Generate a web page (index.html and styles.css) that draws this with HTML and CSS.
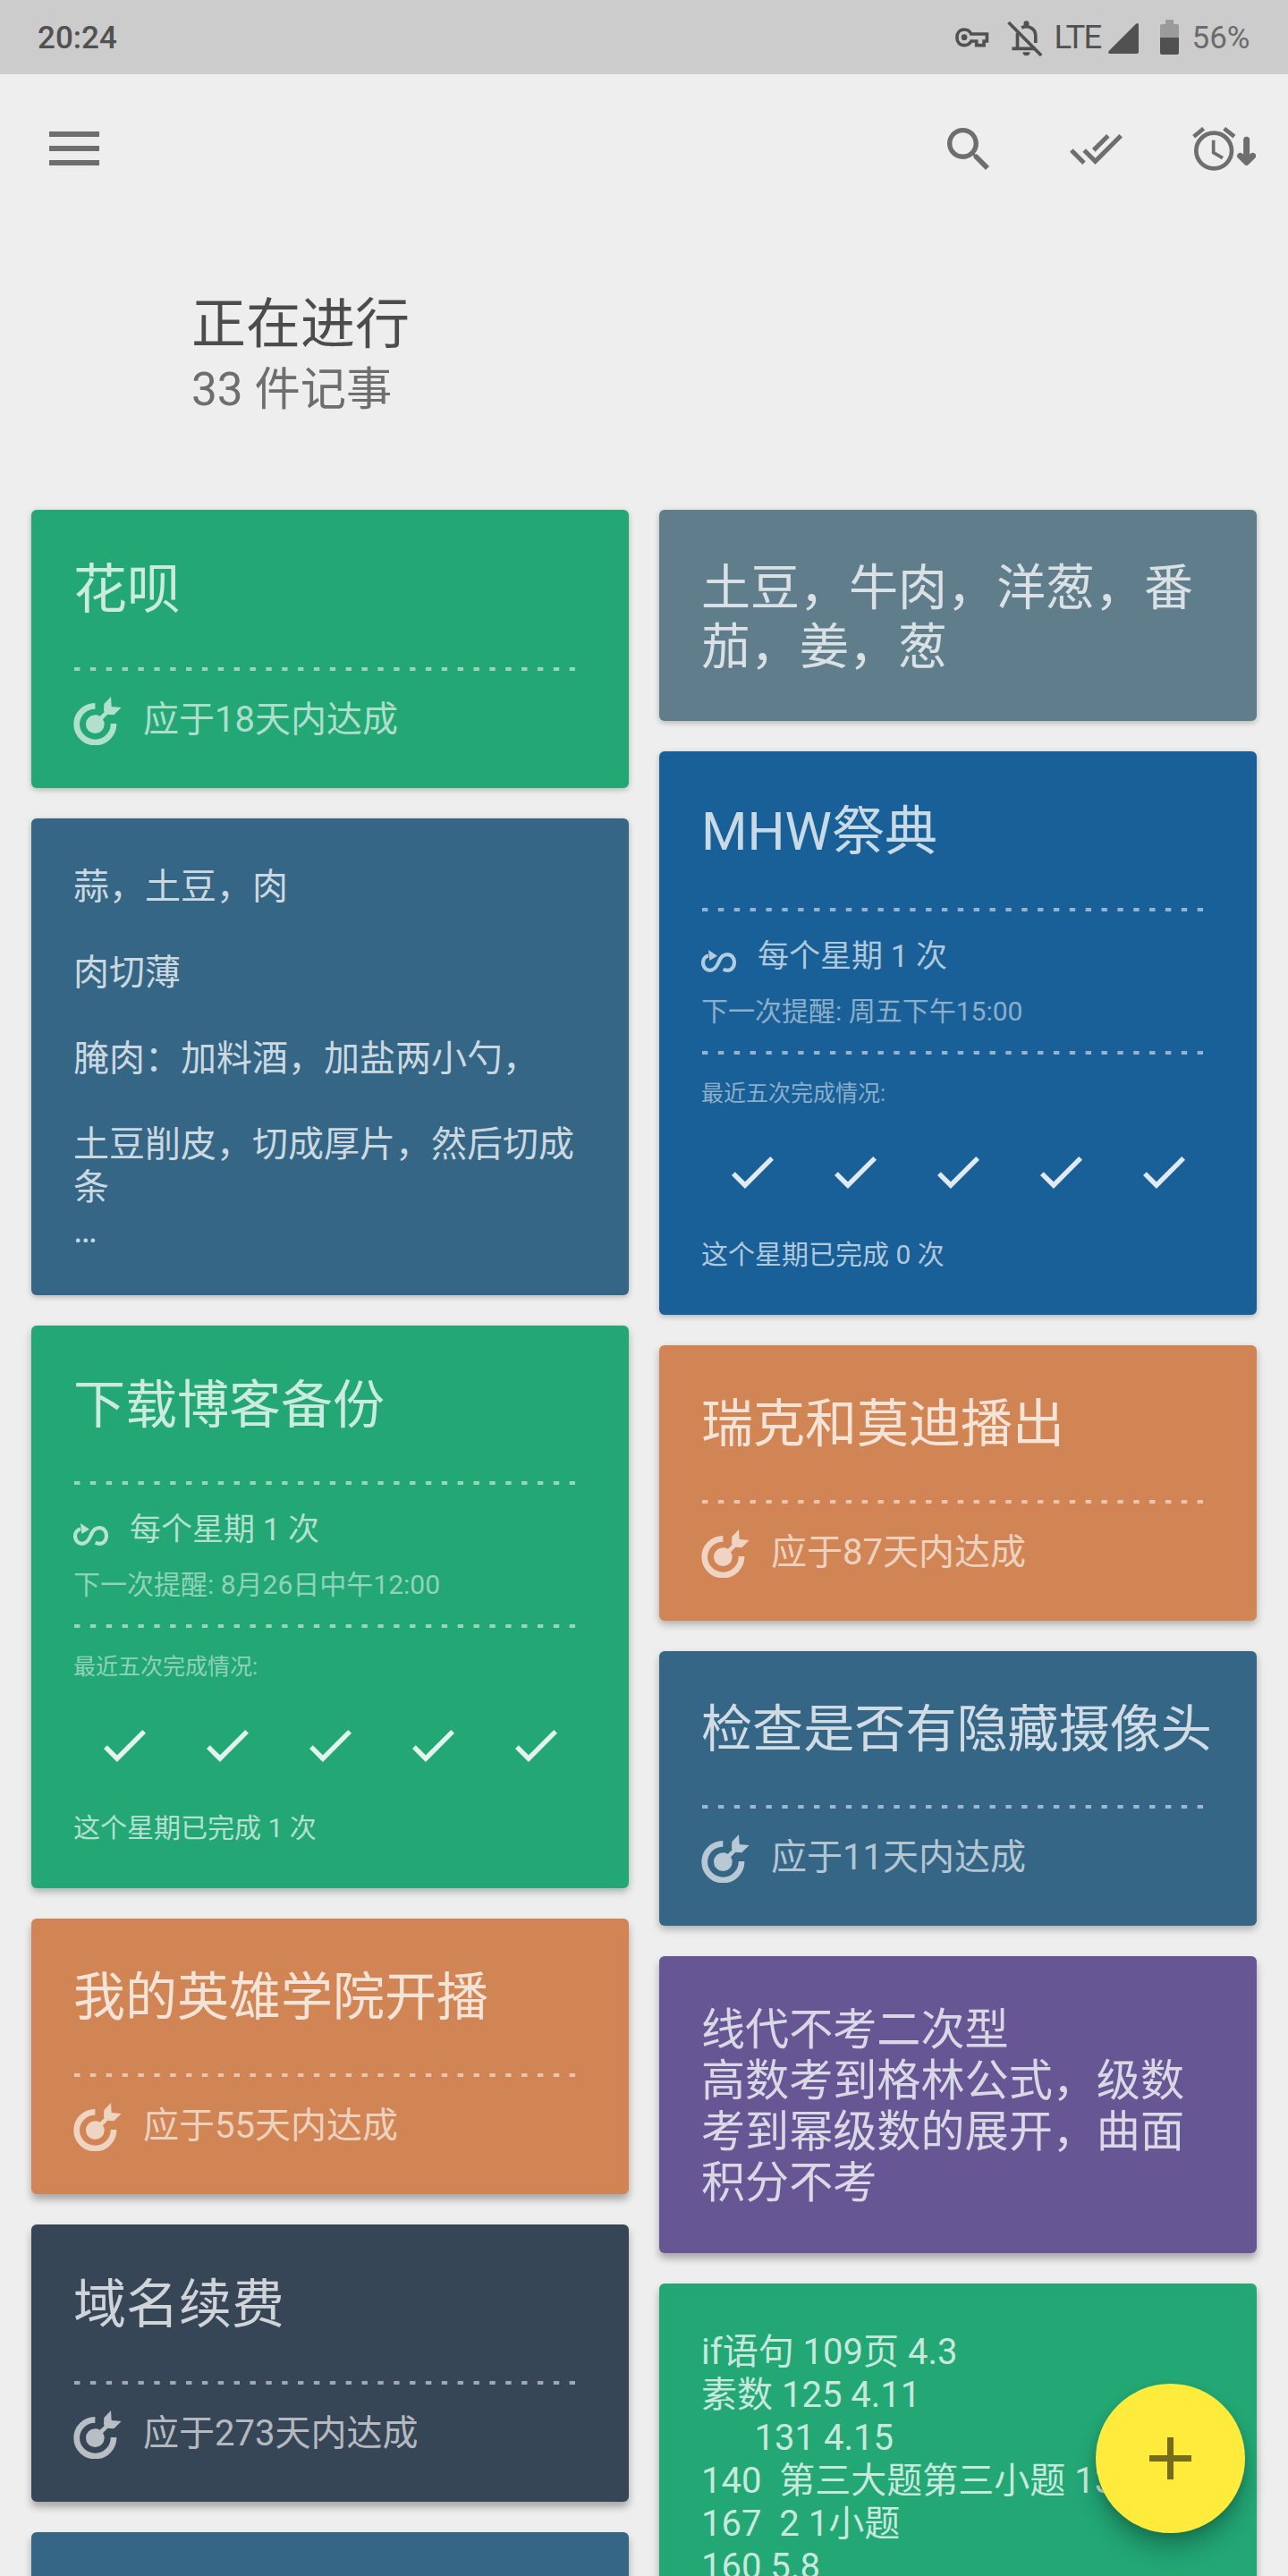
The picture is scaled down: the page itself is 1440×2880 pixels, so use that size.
FILE: index.html
```html
<!DOCTYPE html>
<html lang="zh-CN">
<head>
<meta charset="utf-8">
<title>正在进行</title>
<link rel="stylesheet" href="styles.css">
</head>
<body>
<svg class="defs" aria-hidden="true">
  <symbol id="target" viewBox="12 12 162 162">
    <path fill="none" stroke="currentColor" stroke-width="20" d="M85 43A62 61 0 1 0 147 102"/>
    <path fill="currentColor" d="M85 73Q94 73 101 77L117 62L114 61L115 36L138 12L140 45L173 48L148 73L127 71L111 88Q116 95 116 104A31 31 0 1 1 85 73Z"/>
  </symbol>
  <symbol id="loop" viewBox="12 24 117 75">
    <path fill="none" stroke="currentColor" stroke-width="12.500" d="M36 44C24 46 18 56 18 67C18 82 28 92.500 41 92.500C56 92.500 64 80 70 66C76 50 86 39.500 99 39.500C113 39.500 123 51 123 66C123 81 113 92.500 99 92.500C95 92.500 90 91 86 89"/>
    <path fill="currentColor" d="M36 24L66 44L40 60Z"/>
  </symbol>
  <symbol id="check" viewBox="3.41 5.59 17.59 13.41">
    <path fill="currentColor" d="M9 16.170L4.830 12l-1.420 1.410L9 19 21 7l-1.410-1.410z"/>
  </symbol>
</svg>
<div class="screen">
  <header class="status">
    <span class="clock">20:24</span>
    <svg class="key" viewBox="204 93 112 66"><path fill="none" stroke="#515151" stroke-width="11" d="M257 114H310V138H300V152H275V138H257C252 148 244 152 234 152C219 152 209.500 141 209.500 126C209.500 110 219 99 234 99C245 99 253 105 257 114Z"/><circle cx="234" cy="125" r="10" fill="#515151"/></svg>
    <svg class="bell" viewBox="377 68 119 120"><g fill="none" stroke="#515151"><path stroke-width="11" d="M381 74L491 185"/><path stroke-width="11" d="M393 162H472M411 162V110M425 92C447 82 471 94 472 118V143"/></g><path fill="#515151" d="M432 88V78a9 9 0 0 1 18 0V88zM429 174H453a12 12 0 0 1-24 0z"/></svg>
    <span class="net">LTE</span>
    <svg class="signal" viewBox="0 0 34 34"><path fill="#515151" d="M31 .7Q34-1 34 2V32Q34 34 32 34H2Q-1 34 .7 31Z"/></svg>
    <svg class="battery" viewBox="0 0 21 39"><path fill="#9b9b9b" d="M6 0H15V5H19Q21 5 21 7V20H0V7Q0 5 2 5H6Z"/><path fill="#515151" d="M0 20H21V37Q21 39 19 39H2Q0 39 0 37Z"/></svg>
    <span class="percent">56%</span>
  </header>
  <nav class="toolbar">
    <svg class="menu" viewBox="0 0 56 38"><path fill="#6e6e6e" d="M0 0H56V6H0zM0 16H56V22H0zM0 32H56V38H0z"/></svg>
    <svg class="search" viewBox="3 3 17.490 17.490"><path fill="#6e6e6e" d="M15.500 14h-.79l-.28-.27C15.410 12.590 16 11.110 16 9.500 16 5.910 13.090 3 9.500 3S3 5.910 3 9.500 5.910 16 9.500 16c1.610 0 3.090-.59 4.230-1.570l.27.28v.79l5 4.990L20.490 19l-4.990-5zm-6 0C7.010 14 5 11.990 5 9.500S7.010 5 9.500 5 14 7.010 14 9.500 11.990 14 9.500 14z"/></svg>
    <svg class="done" viewBox=".41 5.590 23.250 13.410"><path fill="#6e6e6e" d="M18 7l-1.410-1.410-6.340 6.340 1.410 1.410L18 7zm4.240-1.410L11.660 16.170 7.480 12l-1.410 1.410L11.660 19l12-12-1.420-1.410zM.41 13.410L6 19l1.410-1.410L1.830 12 .41 13.410z"/></svg>
    <svg class="alarm" viewBox="999 426 214 146"><g fill="none" stroke="#6e6e6e" stroke-width="14"><circle cx="1071.500" cy="505.500" r="59.500"/><path d="M1004 458L1037 431M1106 431L1140 458"/><path stroke-width="11" d="M1070 470V512L1101 530"/><path stroke-width="21" stroke-linecap="round" stroke-linejoin="round" d="M1181 469V542M1160 523L1181 544L1202 523"/></g></svg>
  </nav>
  <section class="heading">
    <h1>正在进行</h1>
    <p>33 件记事</p>
  </section>
  <main class="board">
    <div class="column">
      <article class="card green">
        <h2 class="t60">花呗</h2>
        <svg class="dash"><line x1="0" y1="2" x2="560" y2="2"/></svg>
        <div class="goal"><svg><use href="#target"/></svg><span>应于18天内达成</span></div>
      </article>
      <article class="card steel note">蒜，土豆，肉

肉切薄

腌肉：加料酒，加盐两小勺，

土豆削皮，切成厚片，然后切成
条
…</article>
      <article class="card green mid">
        <h2 class="t58">下载博客备份</h2>
        <svg class="dash"><line x1="0" y1="2" x2="560" y2="2"/></svg>
        <div class="habit"><svg><use href="#loop"/></svg><span>每个星期 1 次</span></div>
        <p class="next">下一次提醒: 8月26日中午12:00</p>
        <svg class="dash"><line x1="0" y1="2" x2="560" y2="2"/></svg>
        <p class="recent">最近五次完成情况:</p>
        <div class="checks"><svg><use href="#check"/></svg><svg><use href="#check"/></svg><svg><use href="#check"/></svg><svg><use href="#check"/></svg><svg><use href="#check"/></svg></div>
        <p class="total">这个星期已完成 1 次</p>
      </article>
      <article class="card orange low">
        <h2 class="t57">我的英雄学院开播</h2>
        <svg class="dash"><line x1="0" y1="2" x2="560" y2="2"/></svg>
        <div class="goal"><svg><use href="#target"/></svg><span>应于55天内达成</span></div>
      </article>
      <article class="card navy low">
        <h2 class="t59">域名续费</h2>
        <svg class="dash"><line x1="0" y1="2" x2="560" y2="2"/></svg>
        <div class="goal"><svg><use href="#target"/></svg><span>应于273天内达成</span></div>
      </article>
      <article class="card steel low next-card"></article>
    </div>
    <div class="column">
      <article class="card slate note n55">土豆，牛肉，洋葱，番
茄，姜，葱</article>
      <article class="card blue">
        <h2 class="t59">MHW祭典</h2>
        <svg class="dash"><line x1="0" y1="2" x2="560" y2="2"/></svg>
        <div class="habit"><svg><use href="#loop"/></svg><span>每个星期 1 次</span></div>
        <p class="next">下一次提醒: 周五下午15:00</p>
        <svg class="dash"><line x1="0" y1="2" x2="560" y2="2"/></svg>
        <p class="recent">最近五次完成情况:</p>
        <div class="checks"><svg><use href="#check"/></svg><svg><use href="#check"/></svg><svg><use href="#check"/></svg><svg><use href="#check"/></svg><svg><use href="#check"/></svg></div>
        <p class="total">这个星期已完成 0 次</p>
      </article>
      <article class="card orange mid">
        <h2 class="t57">瑞克和莫迪播出</h2>
        <svg class="dash"><line x1="0" y1="2" x2="560" y2="2"/></svg>
        <div class="goal"><svg><use href="#target"/></svg><span>应于87天内达成</span></div>
      </article>
      <article class="card steel mid">
        <h2 class="t56">检查是否有隐藏摄像头</h2>
        <svg class="dash"><line x1="0" y1="2" x2="560" y2="2"/></svg>
        <div class="goal"><svg><use href="#target"/></svg><span>应于11天内达成</span></div>
      </article>
      <article class="card purple low note n49">线代不考二次型
高数考到格林公式，级数
考到幂级数的展开，曲面
积分不考</article>
      <article class="card green low note">if语句 109页 4.3
素数 125 4.11
      131 4.15
140  第三大题第三小题 13
167  2 1小题
160 5.8</article>
    </div>
  </main>
  <button class="fab" aria-label="+"><svg viewBox="0 0 47 47"><path fill="#756b1b" d="M20 0H27V20H47V27H27V47H20V27H0V20H20Z"/></svg></button>
</div>
</body>
</html>
```
FILE: styles.css
```css
* { box-sizing: border-box; margin: 0; padding: 0; }
body { background: #eee; font-family: Roboto, "Noto Sans CJK SC", sans-serif; }
svg { display: block; flex: none; }
.defs { position: absolute; width: 0; height: 0; }
.screen { position: relative; width: 1440px; height: 2880px; overflow: hidden; background: #eee; }

.status { display: flex; align-items: flex-start; height: 83px; background: #ccc; color: #515151; font-size: 35px; line-height: 42px; white-space: pre; }
.clock { width: 1026px; padding: 22px 0 0 42px; font-weight: 500; }
.key { width: 37.500px; height: 22px; margin: 31px 0 0 42px; }
.bell { width: 40px; height: 40px; margin: 23px 0 0 20px; }
.net { width: 57px; margin: 21px 0 0 13px; font-size: 36.500px; letter-spacing: -1.800px; }
.signal { width: 34px; height: 34px; margin: 26px 0 0 3px; }
.battery { width: 21px; height: 39px; margin: 22px 0 0 24px; }
.percent { margin: 22px 0 0 15px; color: #6b6b6b; }

.toolbar { display: flex; align-items: flex-start; height: 245px; padding-left: 55px; }
.menu { width: 56px; height: 38px; margin-top: 64px; }
.search { width: 47px; height: 47px; margin: 60px 0 0 948px; }
.done { width: 59px; height: 34px; margin: 67px 0 0 90px; }
.alarm { width: 71.300px; height: 48.700px; margin: 59px 0 0 78px; }

.heading { height: 242px; padding-left: 214px; }
.heading h1 { height: 70px; font-weight: 400; font-size: 61px; line-height: 70px; color: #4c4c4c; }
.heading p { margin-top: 8px; font-size: 51.300px; line-height: 60px; color: #6e6e6e; }

.board { display: flex; gap: 34px; padding-left: 35px; }
.column { display: flex; flex-direction: column; gap: 34px; width: 668px; }
.card { padding: 55px 0 48px 47px; border-radius: 6px; color: rgba(255,255,255,.77); box-shadow: 0 2px 6px rgba(0,0,0,.25); white-space: nowrap; }
.mid { box-shadow: 0 4px 8px rgba(0,0,0,.27); }
.low { box-shadow: 0 6px 9px rgba(0,0,0,.3); }
.green { background: #22a775; }
.steel { background: #356686; }
.slate { background: #607d8b; }
.blue { background: #186097; }
.orange { background: #d18555; }
.navy { background: #374656; }
.purple { background: #665794; }

.note { padding: 53px 0 48px 47px; font-size: 40px; line-height: 48px; white-space: pre; }
.n55 { padding: 54px 0 50px 47px; font-size: 55px; line-height: 66px; }
.n49 { padding: 54px 0 50px 47px; font-size: 49.100px; line-height: 57px; }
.next-card { height: 200px; }

.card h2 { font-weight: 400; }
.t60 { font-size: 60px; line-height: 70px; }
.t59 { font-size: 59px; line-height: 69px; }
.t58 { font-size: 58px; line-height: 68px; }
.t57 { font-size: 58px; line-height: 67px; }
.t56 { font-size: 57.100px; line-height: 66px; }

.dash { width: 562px; height: 4px; margin-left: 1px; stroke: rgba(255,255,255,.53); stroke-width: 4; stroke-dasharray: 6.400 11.460; }
h2 + .dash { margin-top: 51px; }
.goal { display: flex; gap: 24px; height: 54px; margin-top: 29px; color: rgba(255,255,255,.65); font-size: 40px; line-height: 52px; }
.goal svg { width: 54px; height: 54px; }
.habit { display: flex; gap: 24px; height: 42px; margin-top: 29px; color: rgba(255,255,255,.68); font-size: 35px; line-height: 43px; }
.habit svg { width: 39px; height: 25px; margin-top: 14px; }
.next { margin: 23px 0 26px; color: rgba(255,255,255,.5); font-size: 30px; line-height: 36px; }
.recent { margin-top: 29px; color: rgba(255,255,255,.5); font-size: 25px; line-height: 30px; }
.checks { display: grid; grid-template-columns: repeat(5, 115px); justify-items: center; margin: 55px 0 56px; color: rgba(255,255,255,.87); }
.checks svg { width: 47px; height: 36px; }
.total { padding-bottom: 1px; color: rgba(255,255,255,.68); font-size: 30px; line-height: 36px; }

.fab { position: absolute; left: 1225px; top: 2665px; display: flex; align-items: center; justify-content: center; width: 167px; height: 167px; border: 0; border-radius: 50%; background: #ffeb3b; box-shadow: 0 18px 24px rgba(0,0,0,.24), 0 4px 10px rgba(0,0,0,.12); }
.fab svg { width: 47px; height: 47px; }
```
